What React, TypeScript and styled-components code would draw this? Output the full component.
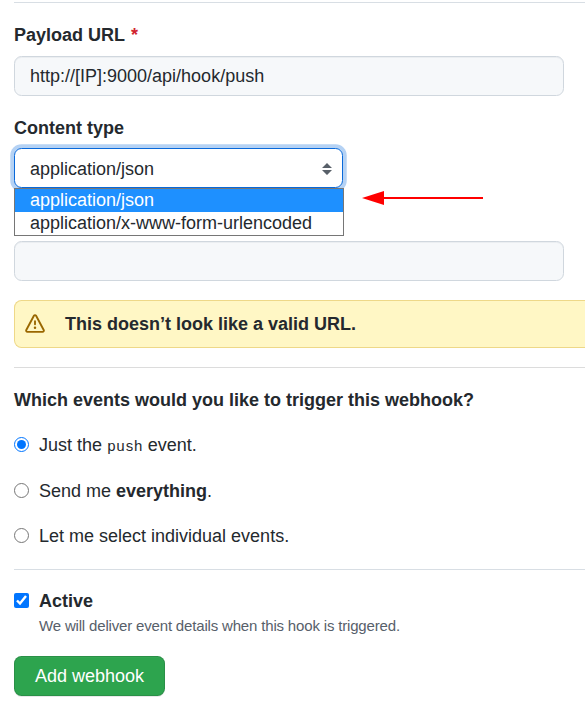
import React from "react";
import styled, { createGlobalStyle } from "styled-components";

const GlobalStyle = createGlobalStyle`
  * { box-sizing: border-box; }
  html, body { margin: 0; overflow: hidden; background: #fff; }
  body {
    font-family: "Liberation Sans", Arial, sans-serif;
    font-size: 18px;
    line-height: 26px;
    color: #24292e;
  }
`;

const Page = styled.form`
  display: flex;
  flex-direction: column;
  align-items: flex-start;
  width: 585px;
  height: 710px;
  padding: 2px 0 0 14px;
  overflow: hidden;
`;

const Divider = styled.hr<{ $color?: string }>`
  flex: none;
  align-self: stretch;
  height: 1px;
  margin: 0;
  border: 0;
  background: ${(p) => p.$color ?? "#d8dee4"};
`;

const FieldLabel = styled.label<{ $top: number; $bottom: number }>`
  margin: ${(p) => p.$top}px 0 ${(p) => p.$bottom}px;
  height: 26px;
  font-weight: 700;
  white-space: nowrap;
`;

const Required = styled.span`
  margin-left: 6px;
  color: #d1242f;
`;

const TextField = styled.input`
  flex: none;
  width: 550px;
  height: 40px;
  padding: 0 15px;
  border: 1px solid #d0d7de;
  border-radius: 7.5px;
  background: #f6f8fa;
  box-shadow: inset 0 1px 0 rgba(208, 215, 222, 0.3);
  color: #24292e;
  font: inherit;
  outline: none;
`;

const SelectWrap = styled.div`
  position: relative;
  flex: none;
  width: 330px;
  height: 40px;
  margin-bottom: 53px;
`;

const SelectBox = styled.div`
  display: flex;
  align-items: center;
  justify-content: space-between;
  width: 329px;
  height: 40px;
  padding: 1px 10px 0 15px;
  border: 1px solid #0969da;
  border-radius: 7.5px;
  box-shadow: 0 0 0 3.75px rgba(9, 105, 218, 0.3);
  background: #fff;
`;

const Options = styled.ul`
  position: absolute;
  top: 40px;
  left: 0;
  width: 330px;
  height: 48px;
  margin: 0;
  padding: 0;
  border: 1px solid #767676;
  background: #fff;
  list-style: none;
`;

const Option = styled.li<{ $active?: boolean }>`
  height: 23px;
  padding-left: 15px;
  line-height: 22px;
  background: ${(p) => (p.$active ? "#1e90ff" : "#fff")};
  color: ${(p) => (p.$active ? "#fff" : "#24292e")};
`;

const Pointer = styled.svg`
  position: absolute;
  left: 348px;
  top: 42px;
`;

const Flash = styled.div`
  display: flex;
  flex: none;
  align-items: center;
  align-self: stretch;
  height: 48px;
  margin: 19px 0;
  padding-left: 10px;
  gap: 20px;
  border: 1px solid #eed888;
  border-right: 0;
  border-radius: 7.5px 0 0 7.5px;
  background: #fff7c5;
  font-weight: 700;
`;

const Question = styled.h2`
  margin: 19px 0;
  font-size: inherit;
  line-height: 26px;
`;

const Choice = styled.label<{ $top?: number; $bottom?: number }>`
  display: flex;
  height: 26px;
  margin: ${(p) => p.$top ?? 0}px 0 ${(p) => p.$bottom ?? 0}px;
  gap: 10px;
  white-space: pre;
`;

const Toggle = styled.input`
  flex: none;
  width: 15px;
  height: 15px;
  margin: 5px 0 0;
`;

const Code = styled.code`
  font-family: "Liberation Mono", monospace;
  font-size: 14.875px;
  line-height: 1;
`;

const Note = styled.p`
  margin: 0 0 18px 25px;
  color: #57606a;
  font-size: 15px;
  letter-spacing: -0.17px;
  line-height: 24px;
`;

const SubmitButton = styled.button`
  width: 151px;
  height: 40px;
  padding: 0;
  border: 1px solid rgba(27, 31, 35, 0.15);
  border-radius: 7.5px;
  background: #2da44e;
  box-shadow: 0 1px 0 rgba(27, 31, 35, 0.1), inset 0 1px 0 rgba(255, 255, 255, 0.03);
  color: #fff;
  font: inherit;
`;

const SortIcon = () => (
  <svg width="10" height="12" viewBox="0 0 10 12" fill="#586069">
    <path d="M0 5 5 0l5 5zM0 7l5 5 5-5z" />
  </svg>
);

const AlertIcon = () => (
  <svg width="20" height="20" viewBox="0 0 16 16" fill="#9a6700">
    <path
      fillRule="evenodd"
      d="M8.22 1.754a.25.25 0 00-.44 0L1.698 13.132a.25.25 0 00.22.368h12.164a.25.25 0 00.22-.368L8.22 1.754zm-1.763-.707c.659-1.234 2.427-1.234 3.086 0l6.082 11.378A1.75 1.75 0 0114.082 15H1.918a1.75 1.75 0 01-1.543-2.575L6.457 1.047zM9 11a1 1 0 11-2 0 1 1 0 012 0zm-.25-5.25a.75.75 0 00-1.5 0v2.5a.75.75 0 001.5 0v-2.5z"
    />
  </svg>
);

export default function App() {
  return (
    <>
      <GlobalStyle />
      <Page onSubmit={(e) => e.preventDefault()}>
        <Divider />
        <FieldLabel $top={19} $bottom={8} htmlFor="url">
          Payload URL<Required>*</Required>
        </FieldLabel>
        <TextField id="url" defaultValue="http://[IP]:9000/api/hook/push" />
        <FieldLabel $top={19} $bottom={7}>Content type</FieldLabel>
        <SelectWrap>
          <SelectBox>
            application/json
            <SortIcon />
          </SelectBox>
          <Options>
            <Option $active>application/json</Option>
            <Option>application/x-www-form-urlencoded</Option>
          </Options>
          <Pointer width="122" height="16" viewBox="0 0 122 16" fill="#f00">
            <path d="M0 8 22 1v14z" />
            <path d="M21 7h100v2H21z" />
          </Pointer>
        </SelectWrap>
        <TextField aria-label="Secret" />
        <Flash>
          <AlertIcon />
          This doesn’t look like a valid URL.
        </Flash>
        <Divider $color="#dcdcdc" />
        <Question>Which events would you like to trigger this webhook?</Question>
        <Choice $bottom={20}>
          <Toggle type="radio" name="events" defaultChecked />
          <span>Just the <Code>push</Code> event.</span>
        </Choice>
        <Choice $bottom={19}>
          <Toggle type="radio" name="events" />
          <span>Send me <b>everything</b>.</span>
        </Choice>
        <Choice $bottom={20}>
          <Toggle type="radio" name="events" />
          <span>Let me select individual events.</span>
        </Choice>
        <Divider />
        <Choice $top={18}>
          <Toggle type="checkbox" defaultChecked />
          <b>Active</b>
        </Choice>
        <Note>We will deliver event details when this hook is triggered.</Note>
        <SubmitButton type="submit">Add webhook</SubmitButton>
      </Page>
    </>
  );
}
